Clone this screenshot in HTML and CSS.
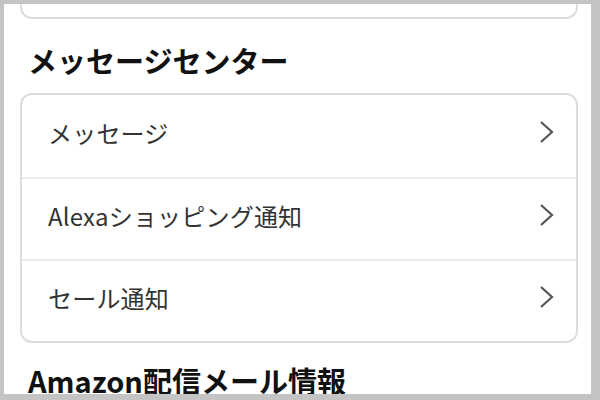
FILE: index.html
```html
<!DOCTYPE html>
<html lang="ja">
<head>
<meta charset="utf-8">
<link rel="stylesheet" href="styles.css">
</head>
<body>
<div class="page">
  <div class="card-top"></div>
  <h2 class="section-title">メッセージセンター</h2>
  <div class="card">
    <div class="row"><span class="label">メッセージ</span><svg class="chev" viewBox="0 0 15 24" width="15" height="24"><polyline points="2,2 13,12 2,22"/></svg></div>
    <div class="row"><span class="label">Alexaショッピング通知</span><svg class="chev" viewBox="0 0 15 24" width="15" height="24"><polyline points="2,2 13,12 2,22"/></svg></div>
    <div class="row"><span class="label">セール通知</span><svg class="chev" viewBox="0 0 15 24" width="15" height="24"><polyline points="2,2 13,12 2,22"/></svg></div>
  </div>
  <h2 class="section-title second">Amazon配信メール情報</h2>
</div>
</body>
</html>
```
FILE: styles.css
```css
html {
  background: #c4c4c4;
}
body {
  margin: 0;
  padding: 4px 9px 0 4px;
  font-family: "Noto Sans CJK JP", "Noto Sans", sans-serif;
}
.page {
  background: #fff;
  height: 390px;
  overflow: hidden;
  padding: 0 13px 0 16px;
}
.card-top {
  height: 13px;
  border: 2px solid #dcdcdc;
  border-top: none;
  border-radius: 0 0 12px 12px;
}
.section-title {
  margin: 23px 0 15px 8px;
  font-size: 29px;
  line-height: 36px;
  font-weight: 700;
  color: #111;
}
.section-title.second {
  margin-top: 19px;
}
.card {
  border: 2px solid #dcdcdc;
  border-radius: 12px;
}
.row {
  height: 82px;
  box-sizing: border-box;
  display: flex;
  align-items: center;
  justify-content: space-between;
  padding: 0 22px 8px 26px;
}
.row + .row {
  border-top: 2px solid #ececec;
}
.label {
  font-size: 24px;
  letter-spacing: 0.2px;
  color: #333;
}
.chev polyline {
  fill: none;
  stroke: #555;
  stroke-width: 2.2;
}
```
